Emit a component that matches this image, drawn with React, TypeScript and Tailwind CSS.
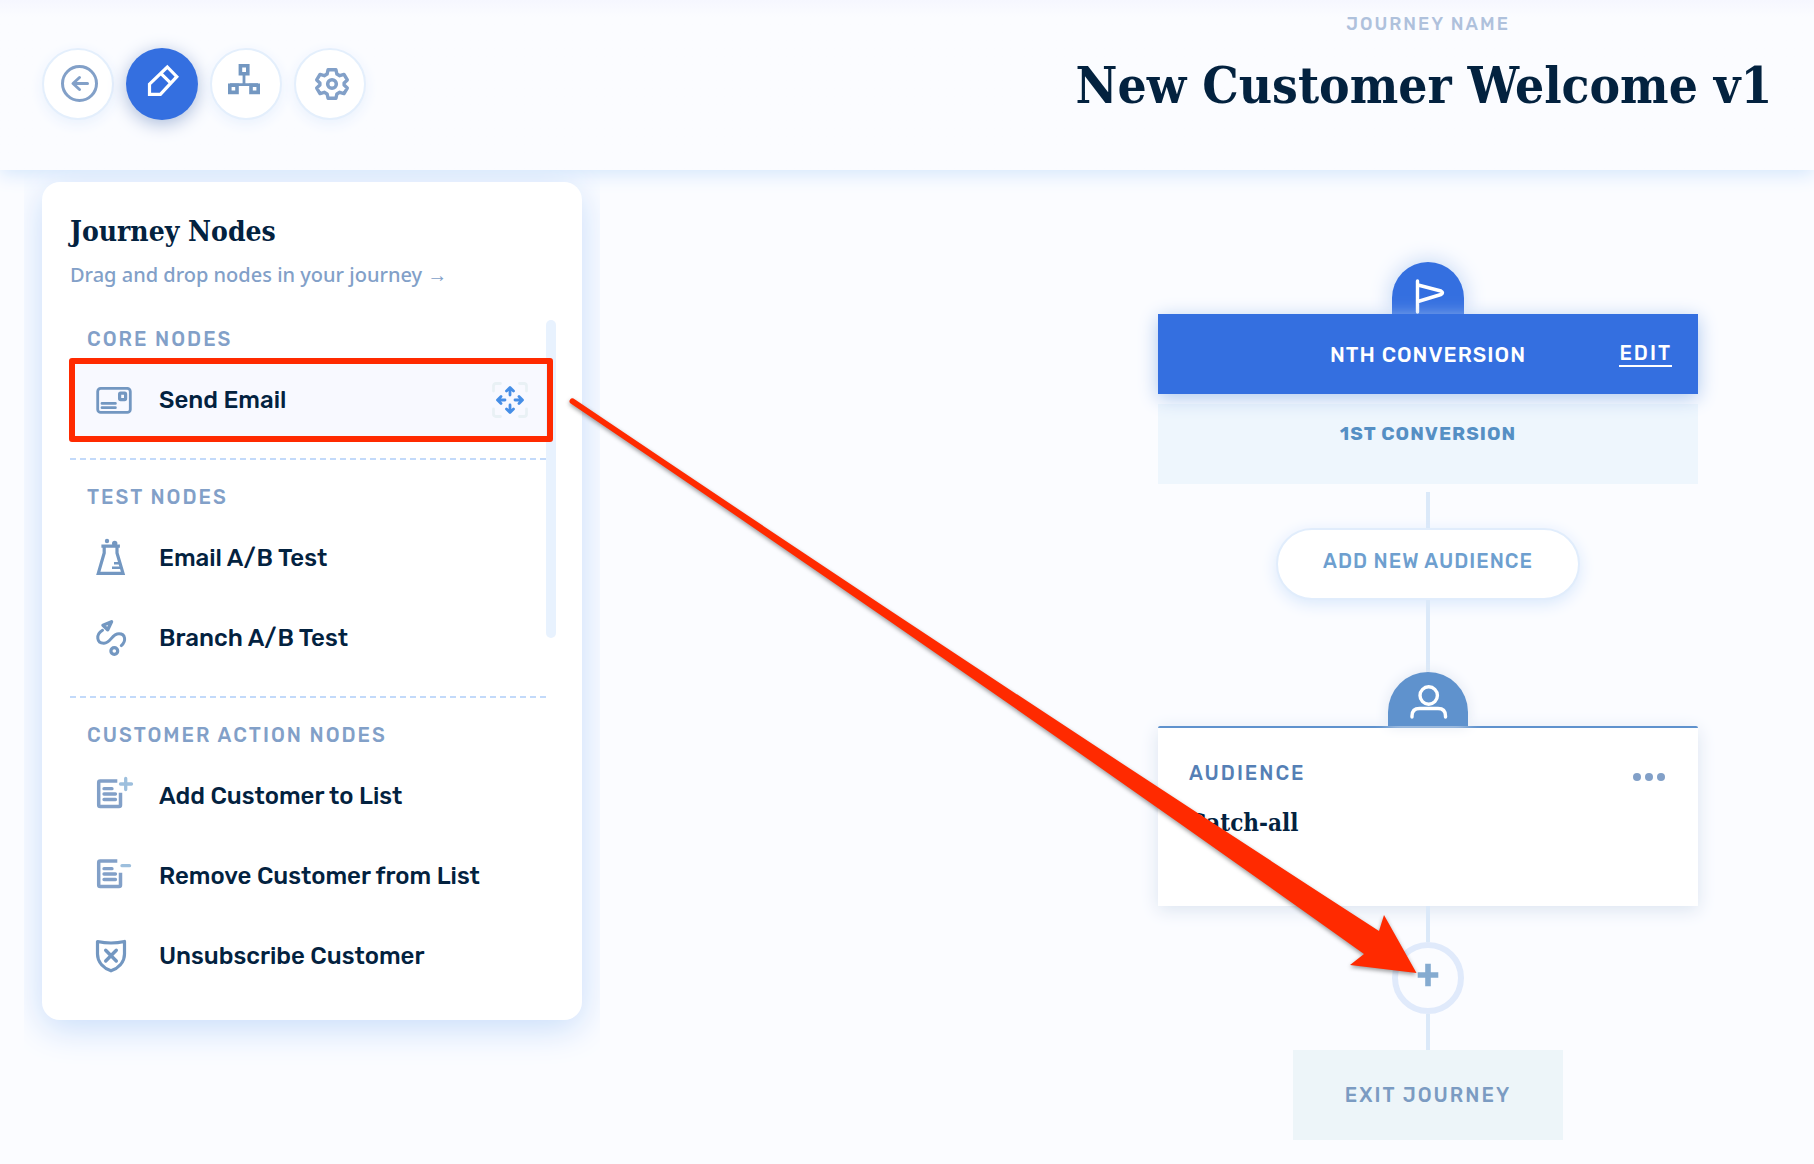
import { ReactNode } from "react";

enum NodeIcon {
  email,
  flask,
  branch,
  listAdd,
  listRemove,
  shield,
}

interface JourneyNode {
  name: string;
  icon: NodeIcon;
  highlighted?: boolean;
}

interface NodeSection {
  title: string;
  nodes: JourneyNode[];
}

const sections: NodeSection[] = [
  {
    title: "CORE NODES",
    nodes: [{ name: "Send Email", icon: NodeIcon.email, highlighted: true }],
  },
  {
    title: "TEST NODES",
    nodes: [
      { name: "Email A/B Test", icon: NodeIcon.flask },
      { name: "Branch A/B Test", icon: NodeIcon.branch },
    ],
  },
  {
    title: "CUSTOMER ACTION NODES",
    nodes: [
      { name: "Add Customer to List", icon: NodeIcon.listAdd },
      { name: "Remove Customer from List", icon: NodeIcon.listRemove },
      { name: "Unsubscribe Customer", icon: NodeIcon.shield },
    ],
  },
];

const App = () => {
  return (
    <div className="relative min-h-screen bg-[#fbfcff] font-['Rubik','Roboto',sans-serif] text-[#03223f] overflow-hidden">
      <Header />
      <main className="flex justify-between items-start">
        <NodesPanel />
        <JourneyCanvas />
      </main>
      <DragArrow />
    </div>
  );
};

const Header = () => {
  return (
    <header className="relative flex justify-between h-[170px] bg-[#fbfcff] bg-linear-to-b from-[#f6f7ff] to-[#fbfcff] to-10% shadow-[0_4px_18px_#d3e6fc]">
      <div className="flex gap-3 pl-[42px] pt-12">
        <ToolButton label="Back">
          <svg width="40" height="40" viewBox="0 0 40 40" fill="none" stroke="#82a0c8" strokeWidth="3" strokeLinecap="round" strokeLinejoin="round">
            <circle cx="21.5" cy="19.5" r="17" />
            <path d="M29.5 19.5H15.5M21.5 13.5l-6.5 6 6.5 6" />
          </svg>
        </ToolButton>
        <ToolButton label="Edit journey" active>
          <svg width="40" height="40" viewBox="0 0 40 40" fill="none" stroke="#fff" strokeWidth="3.2">
            <path d="M7.5 30.4V20.2L25.3 3 34.8 12.7 18.4 30.4zM18.8 9.3 28.7 19.2" />
          </svg>
        </ToolButton>
        <ToolButton label="Journey map">
          <svg width="40" height="40" viewBox="0 0 40 40" fill="none" stroke="#7397c1" strokeWidth="3.6">
            <path d="M14.4 1.8h7.4v8h-7.4zM3.8 21.2h7.2v7.200H3.800zM25 21.200h7.200v7.200H25z" />
            <path d="M18 10v11M4 20.700h28" strokeWidth="2.800" />
          </svg>
        </ToolButton>
        <ToolButton label="Settings">
          <svg width="40" height="40" viewBox="0 0 40 40" fill="none" stroke="#82a0c8" strokeWidth="3.4" strokeLinejoin="round">
            <path d="M18.1 5.7h7.8l1 4.4 2.8 1.6 4.3-1.3 3.3 5.5-3.2 3v2.2l3.2 3-3.3 5.5-4.3-1.3-2.8 1.6-1 4.4h-7.8l-1-4.4-2.8-1.6-4.3 1.3-3.300-5.500 3.200-3v-2.200l-3.200-3 3.300-5.500 4.300 1.300 2.800-1.600z" />
            <circle cx="22" cy="20" r="4.3" strokeWidth="3.6" />
          </svg>
        </ToolButton>
      </div>
      <div className="w-[772px] flex flex-col items-center pt-3">
        <p className="text-[18px] leading-6 font-medium tracking-[2px] text-[#afc1dc]">
          JOURNEY NAME
        </p>
        <h1 className="mt-[17px] pr-2 text-[51px] leading-[64px] font-bold whitespace-nowrap font-['DejaVu_Serif_Condensed','DejaVu_Serif',serif]">
          New Customer Welcome v1
        </h1>
      </div>
    </header>
  );
};

interface ToolButtonProps {
  label: string;
  active?: boolean;
  children: ReactNode;
}

const ToolButton = ({ label, active, children }: ToolButtonProps) => {
  return (
    <button
      aria-label={label}
      className={
        active
          ? "size-[72px] rounded-full flex items-center justify-center bg-[#346fe0] shadow-[0_4px_18px_#a9bbdb]"
          : "size-[72px] rounded-full flex items-center justify-center bg-white border-2 border-[#e4effc] shadow-[0_4px_14px_#e9f1fd]"
      }
    >
      {children}
    </button>
  );
};

const NodesPanel = () => {
  return (
    <div className="relative w-[576px] ml-6 px-[18px] pt-3 pb-12 overflow-hidden">
      <section className="pl-7 pr-[26px] pt-8 pb-6 rounded-[18px] bg-white shadow-[0_8px_36px_#c6dcfa]">
        <h2 className="text-[28px] leading-9 font-bold font-['DejaVu_Serif_Condensed','DejaVu_Serif',serif]">
          Journey Nodes
        </h2>
        <p className="mt-1 text-[20px] leading-[42px] font-medium font-['Noto_Sans',sans-serif] text-[#82a0c8]">
          Drag and drop nodes in your journey →
        </p>
        <div className="flex mt-1.5">
          <div className="flex-1 min-w-0">
            {sections.map((s) => (
              <NodeSectionBlock key={s.title} section={s} />
            ))}
          </div>
          <div className="w-2.5 h-[318px] mt-[18px] rounded-[5px] bg-[#e8f2fe]" />
        </div>
      </section>
    </div>
  );
};

interface NodeSectionBlockProps {
  section: NodeSection;
}

const NodeSectionBlock = ({ section }: NodeSectionBlockProps) => {
  return (
    <div className="pb-[18px] border-b-2 border-dashed border-[#c3dafa] last:pb-0 last:border-b-0">
      <h3 className="pl-[17px] pt-[25px] pb-[9px] text-[20px] leading-6 font-medium tracking-[2px] text-[#82a0c8]">
        {section.title}
      </h3>
      {section.nodes.map((n) => (
        <NodeRow key={n.name} node={n} />
      ))}
    </div>
  );
};

interface NodeRowProps {
  node: JourneyNode;
}

const NodeRow = ({ node }: NodeRowProps) => {
  return (
    <div
      className={
        node.highlighted
          ? "relative flex items-center h-20 pl-6 pr-[18px] bg-[#f8f9ff]"
          : "relative flex items-center h-20 pl-6 pr-[18px]"
      }
    >
      <NodeGlyph icon={node.icon} />
      <span className="ml-[25px] flex-1 text-[24px] leading-8 font-medium whitespace-nowrap">
        {node.name}
      </span>
      {node.highlighted && (
        <>
          <svg width="36" height="36" viewBox="0 0 36 36" fill="none" strokeLinecap="round" strokeLinejoin="round" strokeWidth="2.8">
            <path d="M1.5 9V4q0-2.5 2.5-2.5H8.5M27.5 1.5H32q2.5 0 2.5 2.5V9M34.5 27V32q0 2.5-2.5 2.5H27.5M8.5 34.5H4q-2.5 0-2.5-2.5V27" stroke="#e9f1f5" />
            <path d="M18 13V6M14.500 9 18 5.500 21.500 9M18 23v7M14.500 27l3.500 3.500 3.500-3.500M13 18H6M9 14.500 5.500 18 9 21.500M23 18h7M27 14.500l3.500 3.500-3.500 3.500" stroke="#468ee6" />
          </svg>
          <div className="absolute -top-0.5 -left-px -right-[7px] -bottom-0.5 border-6 border-[#ff2a00] rounded-[3px] pointer-events-none" />
        </>
      )}
    </div>
  );
};

const NodeGlyph = ({ icon }: { icon: NodeIcon }) => {
  return (
    <svg width="40" height="40" viewBox="0 0 40 40" fill="none" stroke="#7397c1" strokeWidth="3" strokeLinecap="round" strokeLinejoin="round">
      {icon === NodeIcon.email && (
        <>
          <rect x="3.7" y="8.4" width="32.6" height="24" rx="3" strokeWidth="2.8" />
          <rect x="25.6" y="13.2" width="6" height="6.4" rx="1" strokeWidth="3.2" />
          <path d="M8 23.4h13.4M8 27.7h13.4" strokeWidth="2.8" />
        </>
      )}
      {icon === NodeIcon.flask && (
        <>
          <path d="M9 8.2H24.300M10.200 8.500V15L4.300 35.300H29L23 15V8.500" strokeWidth="3.200" strokeLinecap="square" strokeLinejoin="miter" />
          <path d="M20 25.300h6M18 29.800h9" strokeLinecap="butt" strokeWidth="2.400" />
          <circle cx="13" cy="3" r="2.200" fill="#7397c1" stroke="none" />
          <circle cx="20.700" cy="5.500" r="2.700" fill="#7397c1" stroke="none" />
        </>
      )}
      {icon === NodeIcon.branch && (
        <>
          <path d="M8.500 12.300C1.500 16.500 2.500 25.500 10 25.300 17 25 17.500 15.800 25 15.800c6.500 0 7.500 7.200 2.300 11.800" />
          <path d="M9 7.200 17.500 3.700 13.700 11.800z" strokeWidth="3.400" />
          <circle cx="20.300" cy="33" r="3.400" strokeWidth="3.200" />
        </>
      )}
      {(icon === NodeIcon.listAdd || icon === NodeIcon.listRemove) && (
        <>
          <path d="M23.300 5H6.200q-1.500 0-1.500 1.500V29q0 1.500 1.500 1.500H25q1.500 0 1.500-1.500V16.700" stroke="#82a0c8" strokeWidth="3.500" strokeLinecap="butt" />
          <path d="M10 12.700h8M10 18h11.500M10 23.500h11.500" stroke="#82a0c8" strokeWidth="3.300" />
          <path d={icon === NodeIcon.listAdd ? "M31.700 2.500V13.500M26.500 8h11" : "M28 9.700h7.500"} stroke="#9dbfdd" strokeWidth="3.300" />
        </>
      )}
      {icon === NodeIcon.shield && (
        <>
          <path d="M3.500 5.500q13.500 3 27 0V18c0 9-7 14.500-13.500 16.800C10.500 32.500 3.500 27 3.500 18z" strokeWidth="3.200" />
          <path d="M11.700 14.200 22.300 25M22.300 14.200 11.700 25" strokeWidth="3.400" />
        </>
      )}
    </svg>
  );
};

const JourneyCanvas = () => {
  return (
    <section className="w-[772px] flex flex-col items-center pt-[92px] pb-6">
      <div className="w-[72px] h-[52px] rounded-t-full flex justify-center bg-[#346fe0] shadow-[0_0_22px_#bdd3f3]">
        <svg width="36" height="52" viewBox="0 0 36 52" fill="none" stroke="#fff" strokeWidth="3.4" strokeLinecap="round" strokeLinejoin="round">
          <path d="M7.500 19V50M8 23 31 29q3 1.500 0 3.500L8 39.500" />
        </svg>
      </div>
      <div className="relative w-[540px] h-20 flex items-center justify-center bg-[#346fe0] text-white shadow-[0_4px_18px_#adc8ee]">
        <h2 className="pt-0.5 text-[21px] leading-7 font-medium tracking-[1px]">NTH CONVERSION</h2>
        <a
          href="#edit"
          className="absolute right-[26px] top-[27px] border-b-2 text-[20px] leading-6 font-medium tracking-[2px]"
        >
          EDIT
        </a>
      </div>
      <div className="w-[540px] h-20 mt-2.5 pt-[18px] text-center bg-[#eef6fd] text-[19px] leading-6 font-bold tracking-[1px] text-[#558fc4]">
        1ST CONVERSION
      </div>

      <div className="w-1 h-9 mt-2 bg-[#dbe9f9]" />
      <button className="w-[304px] h-[72px] pb-1.5 rounded-full bg-white border-2 border-[#e1edfc] shadow-[0_4px_16px_#d9e8fc] text-[20px] leading-6 font-medium tracking-[1px] text-[#6e9fcf]">
        ADD NEW AUDIENCE
      </button>
      <Connector tall />

      <div className="relative w-20 h-[54px] rounded-t-full flex justify-center bg-[#5f92cd] shadow-[0_0_14px_#dfe6f1]">
        <svg width="40" height="54" viewBox="0 0 40 54" fill="none" stroke="#fff" strokeWidth="3.4" strokeLinecap="round">
          <circle cx="20.700" cy="23.500" r="8.700" />
          <path d="M4 45V44q0-7.500 7.500-7.500H30q7.500 0 7.500 7.500V45" />
        </svg>
      </div>
      <div className="w-[540px] h-[180px] pl-[31px] pr-[33px] pt-[33px] bg-white border-t-2 border-[#5f92cd] rounded-t-[2px] shadow-[0_4px_18px_#dbe4f0]">
        <div className="flex justify-between items-center">
          <h3 className="text-[20px] leading-6 font-medium tracking-[2px] text-[#557fb5]">AUDIENCE</h3>
          <button aria-label="Audience menu" className="flex gap-1 pt-2">
            <span className="size-2 rounded-full bg-[#82a0c8]" />
            <span className="size-2 rounded-full bg-[#82a0c8]" />
            <span className="size-2 rounded-full bg-[#82a0c8]" />
          </button>
        </div>
        <p className="mt-[22px] text-[24px] leading-8 font-bold font-['DejaVu_Serif_Condensed','DejaVu_Serif',serif]">
          Catch-all
        </p>
      </div>

      <Connector />
      <button
        aria-label="Add node"
        className="size-[72px] pb-1.5 rounded-full border-6 border-[#e0eafb] flex items-center justify-center"
      >
        <svg width="22" height="24" viewBox="0 0 22 24" fill="none" stroke="#85abd0" strokeWidth="5.600" strokeLinecap="square" strokeLinejoin="round">
          <path d="M11 3.500v17M3.500 12h15" />
        </svg>
      </button>
      <Connector />
      <div className="w-[270px] h-[90px] flex items-center justify-center bg-[#edf5f9] text-[20px] leading-6 font-medium tracking-[2px] text-[#7b9bc2]">
        EXIT JOURNEY
      </div>
    </section>
  );
};

const Connector = ({ tall }: { tall?: boolean }) => (
  <div className={tall ? "w-1 h-[72px] bg-[#dbe9f9]" : "w-1 h-9 bg-[#dbe9f9]"} />
);

// Points from the "Send Email" row to the add button under the audience card
const DragArrow = () => {
  return (
    <svg
      className="absolute left-[560px] top-[390px] pointer-events-none drop-shadow-[0_2px_2px_#0006]"
      width="870"
      height="600"
      viewBox="560 390 870 600"
      fill="#ff2a00"
    >
      <path d="M573.500 398.500Q976 670 1379 931L1384 915 1416.500 973 1350 965 1364 954Q967 671 570 403A3 3 0 0 1 573.500 398.500Z" />
    </svg>
  );
};

export default App;
